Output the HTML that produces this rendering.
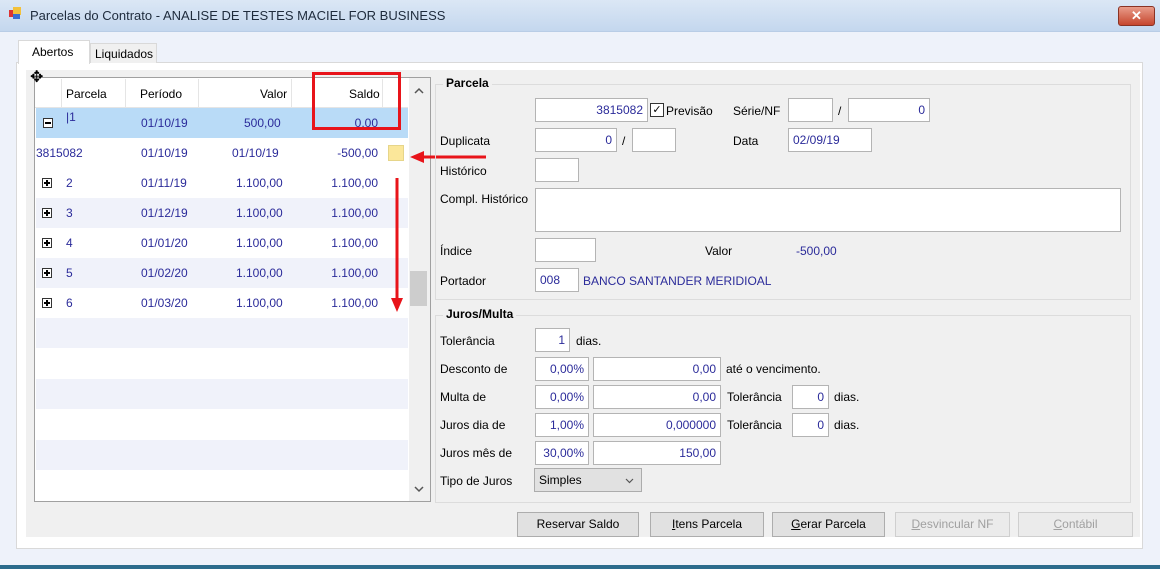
<!DOCTYPE html>
<html><head><meta charset="utf-8"><style>
*{box-sizing:border-box;margin:0;padding:0}
body{width:1160px;height:569px;overflow:hidden;background:#eef2fa;font-family:"Liberation Sans",sans-serif;font-size:12px;color:#000;position:relative}
.a{position:absolute}
.in{position:absolute;background:#fff;border:1px solid #b4b4b4;color:#2b2b9a;text-align:right;padding:0 4px;line-height:22px;height:24px;font-size:12px}
.lb{position:absolute;font-size:12px;line-height:14px}
.bl{color:#2b2b9a}
.btn{position:absolute;top:512px;height:25px;border:1px solid #adadad;background:#e1e1e1;text-align:center;line-height:23px;font-size:12px}
.dis{color:#a0a0a0;background:#ebebeb;border-color:#cfcfcf}
.row{position:absolute;left:36px;width:372px;height:30px;line-height:30px;color:#2b2b9a;font-size:12px}
.row span{position:absolute}
.pm{position:absolute;left:5px;top:10px;width:10px;height:10px;border:1px solid #333;background:#fff}
.pm:before{content:"";position:absolute;left:1px;top:3px;width:6px;height:2px;background:#000}
.pm.p:after{content:"";position:absolute;left:3px;top:1px;width:2px;height:6px;background:#000}
</style></head><body>
<div class="a" style="left:0;top:0;width:1160px;height:32px;background:linear-gradient(#dbe7f5,#c4d7ee);border-bottom:1px solid #b9cde6"></div>
<div class="a" style="left:9px;top:10px;width:7px;height:7px;background:#d33"></div>
<div class="a" style="left:13px;top:7px;width:8px;height:8px;background:#f3c13a"></div>
<div class="a" style="left:13px;top:14px;width:7px;height:5px;background:#3a6fd1"></div>
<div class="lb" style="left:30px;top:9px;font-size:13px;color:#1e2b3c">Parcelas do Contrato - ANALISE DE TESTES MACIEL FOR BUSINESS</div>
<div class="a" style="left:1118px;top:6px;width:37px;height:20px;border:1px solid #8a3324;border-radius:3px;background:linear-gradient(#e99c8a,#c6462d);color:#fff;text-align:center;font-weight:bold;font-size:13px;line-height:17px">✕</div>
<div class="a" style="left:0;top:565px;width:1160px;height:4px;background:#2c6c8c"></div>
<!-- tabs -->
<div class="a" style="left:16px;top:62px;width:1127px;height:487px;background:#fff;border:1px solid #d9d9d9"></div>
<div class="a" style="left:18px;top:40px;width:72px;height:24px;background:#fff;border:1px solid #d9d9d9;border-bottom:none"></div>
<div class="lb" style="left:32px;top:45px">Abertos</div>
<div class="a" style="left:90px;top:43px;width:67px;height:20px;background:#f0f0f0;border:1px solid #d9d9d9;border-bottom:none"></div>
<div class="lb" style="left:95px;top:47px">Liquidados</div>
<div class="a" style="left:26px;top:70px;width:1114px;height:467px;background:#f0f0f0"></div>
<!-- grid -->
<div class="a" style="left:34px;top:77px;width:397px;height:425px;background:#fff;border:1px solid #a0a0a0"></div>
<div class="a" style="left:35px;top:78px;width:373px;height:30px;background:#fff;border-bottom:1px solid #e5e5e5"></div>
<div class="a" style="left:61px;top:79px;width:1px;height:28px;background:#e5e5e5"></div>
<div class="a" style="left:125px;top:79px;width:1px;height:28px;background:#e5e5e5"></div>
<div class="a" style="left:198px;top:79px;width:1px;height:28px;background:#e5e5e5"></div>
<div class="a" style="left:291px;top:79px;width:1px;height:28px;background:#e5e5e5"></div>
<div class="a" style="left:382px;top:79px;width:1px;height:28px;background:#e5e5e5"></div>
<div class="lb" style="left:66px;top:87px">Parcela</div>
<div class="lb" style="left:140px;top:87px">Período</div>
<div class="lb" style="left:260px;top:87px">Valor</div>
<div class="lb" style="left:349px;top:87px">Saldo</div>
<div class="lb" style="left:30px;top:71px;font-size:16px">✥</div>
<div class="a" style="left:36px;top:108px;width:372px;height:30px;background:#b9dbf7"></div>
<div class="row" style="top:108px"><div class="pm" style="left:7px"></div><span style="left:30px;line-height:18px">|1</span><span style="left:105px">01/10/19</span><span style="left:208px">500,00</span><span style="right:30px">0,00</span></div>
<div class="row" style="top:138px"><span style="left:0">3815082</span><span style="left:105px">01/10/19</span><span style="left:196px">01/10/19</span><span style="right:30px">-500,00</span></div>
<div class="a" style="left:388px;top:145px;width:16px;height:16px;background:#fbe79a;border:1px solid #e6d58a"></div>
<div class="a" style="left:36px;top:198px;width:372px;height:30px;background:#f0f2fa"></div>
<div class="a" style="left:36px;top:258px;width:372px;height:30px;background:#f0f2fa"></div>
<div class="a" style="left:36px;top:318px;width:372px;height:30px;background:#f0f2fa"></div>
<div class="a" style="left:36px;top:379px;width:372px;height:30px;background:#f0f2fa"></div>
<div class="a" style="left:36px;top:440px;width:372px;height:30px;background:#f0f2fa"></div>
<div class="row" style="top:168px"><div class="pm p" style="left:6px"></div><span style="left:30px">2</span><span style="left:105px">01/11/19</span><span style="left:200px">1.100,00</span><span style="right:30px">1.100,00</span></div>
<div class="row" style="top:198px"><div class="pm p" style="left:6px"></div><span style="left:30px">3</span><span style="left:105px">01/12/19</span><span style="left:200px">1.100,00</span><span style="right:30px">1.100,00</span></div>
<div class="row" style="top:228px"><div class="pm p" style="left:6px"></div><span style="left:30px">4</span><span style="left:105px">01/01/20</span><span style="left:200px">1.100,00</span><span style="right:30px">1.100,00</span></div>
<div class="row" style="top:258px"><div class="pm p" style="left:6px"></div><span style="left:30px">5</span><span style="left:105px">01/02/20</span><span style="left:200px">1.100,00</span><span style="right:30px">1.100,00</span></div>
<div class="row" style="top:288px"><div class="pm p" style="left:6px"></div><span style="left:30px">6</span><span style="left:105px">01/03/20</span><span style="left:200px">1.100,00</span><span style="right:30px">1.100,00</span></div>
<div class="a" style="left:409px;top:78px;width:21px;height:423px;background:#f0f0f0"></div>
<div class="a" style="left:410px;top:271px;width:17px;height:35px;background:#cdcdcd"></div>
<svg class="a" style="left:409px;top:78px" width="21" height="423"><path d="M6 15 L10 11 L14 15" stroke="#555" stroke-width="1.5" fill="none"/><path d="M6 409 L10 413 L14 409" stroke="#555" stroke-width="1.5" fill="none"/></svg>
<!-- red annotations -->
<div class="a" style="left:312px;top:72px;width:89px;height:58px;border:3px solid #e8141a"></div>
<svg class="a" style="left:0;top:0" width="1160" height="569"><path d="M486 157 L420 157" stroke="#e8141a" stroke-width="3"/><path d="M410 157 L424 151 L424 163Z" fill="#e8141a"/><path d="M397 178 L397 300" stroke="#e8141a" stroke-width="3"/><path d="M391 298 L403 298 L397 312Z" fill="#e8141a"/></svg>
<!-- Parcela group -->
<div class="a" style="left:435px;top:84px;width:696px;height:216px;border:1px solid #dcdcdc"></div>
<div class="lb" style="left:443px;top:76px;font-weight:bold;background:#f0f0f0;padding:0 3px">Parcela</div>
<div class="in" style="left:535px;top:98px;width:113px">3815082</div>
<div class="a" style="left:650px;top:103px;width:14px;height:14px;border:1px solid #333;background:#fff;font-size:11px;line-height:12px;text-align:center">✓</div>
<div class="lb" style="left:666px;top:104px">Previsão</div>
<div class="lb" style="left:733px;top:104px">Série/NF</div>
<div class="in" style="left:788px;top:98px;width:45px"></div>
<div class="lb" style="left:838px;top:104px">/</div>
<div class="in" style="left:848px;top:98px;width:82px">0</div>
<div class="lb" style="left:440px;top:134px">Duplicata</div>
<div class="in" style="left:535px;top:128px;width:82px">0</div>
<div class="lb" style="left:622px;top:134px">/</div>
<div class="in" style="left:632px;top:128px;width:44px"></div>
<div class="lb" style="left:733px;top:134px">Data</div>
<div class="in" style="left:788px;top:128px;width:84px;text-align:left">02/09/19</div>
<div class="lb" style="left:440px;top:164px">Histórico</div>
<div class="in" style="left:535px;top:158px;width:44px"></div>
<div class="lb" style="left:440px;top:192px">Compl. Histórico</div>
<div class="in" style="left:535px;top:188px;width:586px;height:44px"></div>
<div class="lb" style="left:440px;top:244px">Índice</div>
<div class="in" style="left:535px;top:238px;width:61px"></div>
<div class="lb" style="left:705px;top:244px">Valor</div>
<div class="lb bl" style="left:796px;top:244px">-500,00</div>
<div class="lb" style="left:440px;top:274px">Portador</div>
<div class="in" style="left:535px;top:268px;width:44px;text-align:left">008</div>
<div class="lb bl" style="left:583px;top:274px">BANCO SANTANDER MERIDIOAL</div>
<!-- Juros group -->
<div class="a" style="left:435px;top:315px;width:696px;height:188px;border:1px solid #dcdcdc"></div>
<div class="lb" style="left:443px;top:307px;font-weight:bold;background:#f0f0f0;padding:0 3px">Juros/Multa</div>
<div class="lb" style="left:440px;top:334px">Tolerância</div>
<div class="in" style="left:535px;top:328px;width:35px">1</div>
<div class="lb" style="left:576px;top:334px">dias.</div>
<div class="lb" style="left:440px;top:362px">Desconto de</div>
<div class="in" style="left:535px;top:357px;width:54px">0,00%</div>
<div class="in" style="left:593px;top:357px;width:128px">0,00</div>
<div class="lb" style="left:726px;top:362px">até o vencimento.</div>
<div class="lb" style="left:440px;top:390px">Multa de</div>
<div class="in" style="left:535px;top:385px;width:54px">0,00%</div>
<div class="in" style="left:593px;top:385px;width:128px">0,00</div>
<div class="lb" style="left:727px;top:390px">Tolerância</div>
<div class="in" style="left:792px;top:385px;width:37px">0</div>
<div class="lb" style="left:834px;top:390px">dias.</div>
<div class="lb" style="left:440px;top:418px">Juros dia de</div>
<div class="in" style="left:535px;top:413px;width:54px">1,00%</div>
<div class="in" style="left:593px;top:413px;width:128px">0,000000</div>
<div class="lb" style="left:727px;top:418px">Tolerância</div>
<div class="in" style="left:792px;top:413px;width:37px">0</div>
<div class="lb" style="left:834px;top:418px">dias.</div>
<div class="lb" style="left:440px;top:446px">Juros mês de</div>
<div class="in" style="left:535px;top:441px;width:54px">30,00%</div>
<div class="in" style="left:593px;top:441px;width:128px">150,00</div>
<div class="lb" style="left:440px;top:474px">Tipo de Juros</div>
<div class="a" style="left:534px;top:468px;width:108px;height:24px;border:1px solid #acacac;background:#e1e1e1;line-height:22px;padding-left:4px">Simples<svg style="position:absolute;right:7px;top:9px" width="9" height="6"><path d="M1 1 L4.5 4.5 L8 1" stroke="#555" stroke-width="1.2" fill="none"/></svg></div>
<div class="btn" style="left:517px;width:122px">Reservar Saldo</div>
<div class="btn" style="left:650px;width:114px"><u>I</u>tens Parcela</div>
<div class="btn" style="left:772px;width:113px"><u>G</u>erar Parcela</div>
<div class="btn dis" style="left:895px;width:115px"><u>D</u>esvincular NF</div>
<div class="btn dis" style="left:1018px;width:115px"><u>C</u>ontábil</div>
</body></html>
